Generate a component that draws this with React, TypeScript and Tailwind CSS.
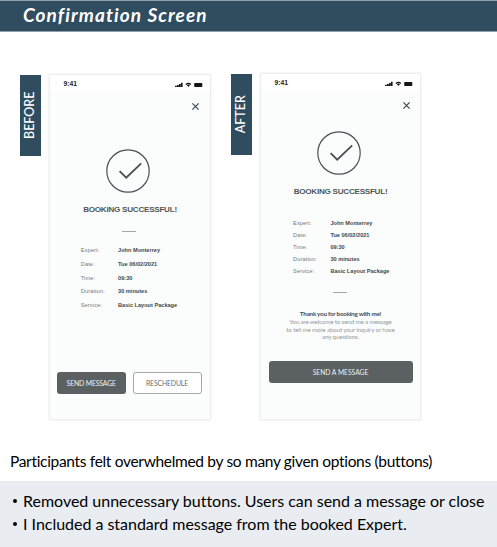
import React from "react";

const details: [string, string][] = [
  ["Expert:", "John Monterrey"],
  ["Date:", "Tue 06/02/2021"],
  ["Time:", "09:30"],
  ["Duration:", "30 minutes"],
  ["Service:", "Basic Layout Package"],
];

const notes = [
  "Removed unnecessary buttons. Users can send a message or close",
  "I Included a standard message from the booked Expert.",
];

function StatusBar() {
  return (
    <div className="flex h-4 items-center justify-between bg-white pt-[3px] pr-[7px] pl-[13.5px]">
      <span className="text-[6.7px] leading-none font-bold text-[#222]">9:41</span>
      <svg className="h-[6px] w-[28px]" viewBox="0 0 28 6" fill="#161616">
        <path d="M0 3.8h1.8V5H0zM2 3h1.8v2H2zM4 2h1.8v3H4zM6 .8h1.6V5H6z" />
        <path d="M10.5 2.1Q13.4-.4 16.3 2.1L15.4 3Q13.4 1.5 11.4 3zM11.9 3.3q1.5-1 3 0L13.4 5z" />
        <rect x="19.2" y="1" width="8.1" height="4" rx="0.8" />
      </svg>
    </div>
  );
}

function CloseIcon() {
  return (
    <svg className="size-[7px]" viewBox="0 0 7 7" fill="none" stroke="#344653" strokeWidth="1.15">
      <path d="M.4.4l6.2 6.2M6.6.4L.4 6.6" />
    </svg>
  );
}

function SuccessIcon() {
  return (
    <svg className="size-[44px]" viewBox="0 0 44 44" fill="none" stroke="#4b5052">
      <circle cx="22" cy="22" r="21.2" strokeWidth="1.2" />
      <path d="M13.6 22.1l6.6 6.6L35.2 14.3" strokeWidth="1.8" />
    </svg>
  );
}

function Details({ rowClass }: { rowClass: string }) {
  return (
    <dl className="text-[5.6px]">
      {details.map(([label, value]) => (
        <div key={label} className={"flex items-center whitespace-nowrap " + rowClass}>
          <dt className="w-[37.4px] tracking-[0.15px] text-[#73787a]">{label}</dt>
          <dd className="font-bold text-[#45494b]">{value}</dd>
        </div>
      ))}
    </dl>
  );
}

function Tag({ children }: { children: string }) {
  return (
    <div className="flex h-[81px] w-[21px] shrink-0 items-center justify-center bg-[#304d60]">
      <span className="-rotate-90 font-[Lato] text-[12.5px] leading-none font-medium text-white">{children}</span>
    </div>
  );
}

const phone =
  "flex shrink-0 flex-col bg-[#fbfdfc] font-['Liberation_Sans',sans-serif] shadow-[0_0_2px_1px_#e5e6e6]";

export default function App() {
  return (
    <main className="h-[547px] w-[497px] overflow-hidden bg-white font-[Lato,sans-serif] text-black">
      <h1 className="flex h-8 items-center border-y border-[#8fa2ab] bg-[#304d60] pb-[3px] pl-[23px] text-[19px] leading-none font-bold tracking-[1.1px] text-white italic">
        Confirmation Screen
      </h1>

      <section className="flex h-[416px] items-start pt-[42px] pl-[20px]">
        <div className="flex pt-px">
          <Tag>BEFORE</Tag>
          <article className={phone + " ml-[9px] h-[344px] w-[160px]"}>
            <StatusBar />
            <div className="flex justify-end pt-[12px] pr-[11.5px]">
              <CloseIcon />
            </div>
            <div className="flex flex-col items-center pr-[4px] pt-[39px]">
              <SuccessIcon />
              <h2 className="mt-[12px] pl-[4px] text-[8.1px] leading-[10px] font-bold tracking-[-0.25px] text-[#515557]">
                BOOKING SUCCESSFUL!
              </h2>
              <div className="mt-[16px] ml-[2px] h-px w-[14px] bg-[#a3a6a7]" />
            </div>
            <div className="pt-[11.7px] pl-[30.7px]">
              <Details rowClass="h-[13.65px]" />
            </div>
            <div className="mt-[60.5px] flex gap-[7px] pl-[7px] font-[Lato] text-[6.9px] tracking-[-0.16px]">
              <button className="h-[21.5px] w-[68.5px] rounded-[3px] bg-[#5b6062] text-[#f0f1f1]">SEND MESSAGE</button>
              <button className="h-[21.5px] w-[69px] rounded-[3px] border border-[#a5a8a9] bg-white text-[#6b6f71]">
                RESCHEDULE
              </button>
            </div>
          </article>
        </div>

        <div className="ml-[21px] flex">
          <Tag>AFTER</Tag>
          <article className={phone + " ml-[9px] h-[345px] w-[159px]"}>
            <StatusBar />
            <div className="flex justify-end pt-[12px] pr-[10.5px]">
              <CloseIcon />
            </div>
            <div className="flex flex-col items-center pr-[3px] pt-[22px]">
              <SuccessIcon />
              <h2 className="mt-[12px] pl-[3px] text-[8.1px] leading-[10px] font-bold tracking-[-0.25px] text-[#515557]">
                BOOKING SUCCESSFUL!
              </h2>
            </div>
            <div className="pt-[20px] pl-[32px]">
              <Details rowClass="h-[12px]" />
            </div>
            <div className="mt-[15px] ml-[72px] h-px w-[14px] bg-[#a3a6a7]" />
            <p className="mt-[17px] text-center font-[Lato] text-[6.3px] leading-[7.8px] tracking-[-0.18px] text-[#999c9d]">
              <strong className="font-bold tracking-[-0.25px] text-[#484c4e]">Thank you for booking with me!</strong>
              <br />
              You are welcome to send me a message
              <br />
              to tell me more about your inquiry or have
              <br />
              any questions.
            </p>
            <button className="mt-[20px] ml-[7.5px] h-[21.5px] w-[144px] shrink-0 rounded-[3px] bg-[#5b6062] font-[Lato] text-[6.7px] text-[#f0f1f1]">
              SEND A MESSAGE
            </button>
          </article>
        </div>
      </section>

      <p className="h-[33px] pt-[3px] pl-[10px] text-[15.5px] leading-[20px] tracking-[-0.32px] whitespace-nowrap">
        Participants felt overwhelmed by so many given options (buttons)
      </p>
      <ul className="h-[66px] bg-[#e9ecf1] pt-[8px] pl-[13px] text-[16px] leading-[23px] tracking-[-0.02px] whitespace-nowrap">
        {notes.map((note) => (
          <li key={note} className="flex items-center">
            <span className="mr-[6px] size-1 rounded-full bg-black" />
            {note}
          </li>
        ))}
      </ul>
    </main>
  );
}
